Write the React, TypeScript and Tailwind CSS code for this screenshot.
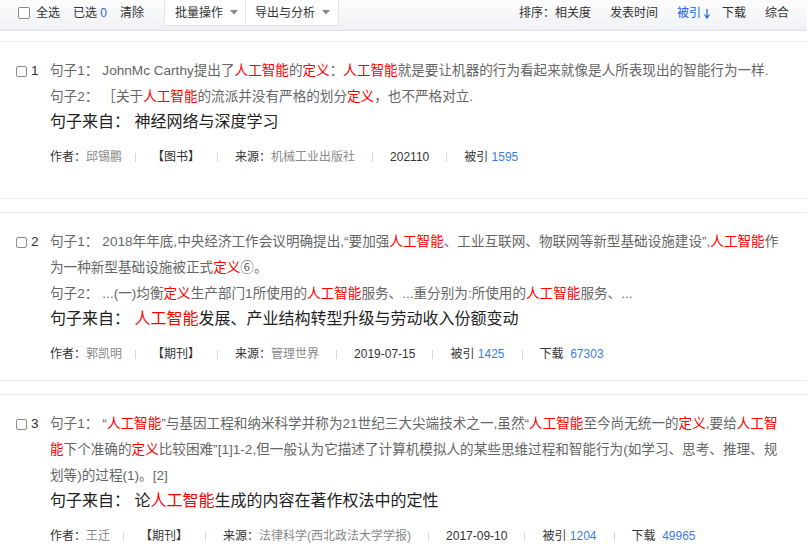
import React from "react";

const R = ({ children }: { children: React.ReactNode }) => (
  <span className="text-[#f00]">{children}</span>
);

const L = ({ children }: { children: React.ReactNode }) => (
  <span className="mr-[4px]">{children}</span>
);

function Box() {
  return <span className="inline-block w-[11px] h-[11px] border border-[#8c8c8c] rounded-[2px] bg-white" />;
}

function Caret() {
  return (
    <svg width="8" height="5" viewBox="0 0 8 5" className="ml-[7px]">
      <path d="M0 0h8L4 4.5z" fill="#888" />
    </svg>
  );
}

function Sep({ className = "mx-[17px]" }: { className?: string }) {
  return <span className={`inline-block w-px h-[9px] bg-[#d8d8d8] ${className}`} />;
}

interface MetaProps {
  author: string;
  kind: string;
  source: string;
  date: string;
  cite: string;
  download?: string;
}

function Meta({ author, kind, source, date, cite, download }: MetaProps) {
  return (
    <div className="flex items-center h-[20px] text-[12px] text-[#333] mt-[13px]">
      <span>作者：</span>
      <span className="text-[#888]">{author}</span>
      <Sep className="ml-[13px] mr-[16px]" />
      <span>{kind}</span>
      <Sep />
      <span>来源：</span>
      <span className="text-[#888]">{source}</span>
      <Sep />
      <span>{date}</span>
      <Sep />
      <span>
        被引 <span className="text-[#3c7de6]">{cite}</span>
      </span>
      {download && (
        <>
          <Sep />
          <span>
            下载&nbsp; <span className="text-[#3c7de6]">{download}</span>
          </span>
        </>
      )}
    </div>
  );
}

interface ItemProps {
  n: number;
  sentences: React.ReactNode;
  title: React.ReactNode;
  meta: MetaProps;
  pb: string;
}

function Item({ n, sentences, title, meta, pb }: ItemProps) {
  return (
    <div className={`flex border-y border-[#ebebeb] pt-[16px] ${pb}`}>
      <div className="w-[50px] pl-[16px] flex items-center h-[26px] gap-[4px] text-[13.6px] text-[#333]">
        <Box />
        <span>{n}</span>
      </div>
      <div className="flex-1 pr-[22px]">
        <div className="text-[13.6px] leading-[26px] text-[#666]">{sentences}</div>
        <div className="text-[16px] leading-[24px] text-[#222]">
          句子来自：&nbsp;{title}
        </div>
        <Meta {...meta} />
      </div>
    </div>
  );
}

export default function App() {
  return (
    <div
      className="w-[807px] h-[559px] overflow-hidden bg-white [text-spacing-trim:space-all]"
      style={{ fontFamily: '"Liberation Sans", "Noto Sans CJK SC", sans-serif' }}
    >
      {/* toolbar */}
      <div className="h-[31px] flex items-start border-b border-[#dde1e7] bg-linear-to-b from-[#fdfdfe] to-[#eff1f4] text-[12px] text-[#333]">
        <div className="flex items-center h-[26px] pl-[18px]">
          <span className="inline-block w-[12px] h-[12px] border border-[#8c8c8c] rounded-[2px] bg-white" />
          <span className="ml-[6px]">全选</span>
          <span className="ml-[13px]">
            已选 <span className="text-[#2266cc]">0</span>
          </span>
          <span className="ml-[13px]">清除</span>
        </div>
        <div className="flex ml-[20px] h-[26px]">
          <div className="flex items-center w-[82px] pl-[10px] bg-white border-x border-b border-[#e2e4e8]">
            批量操作
            <Caret />
          </div>
          <div className="flex items-center w-[93px] pl-[9px] bg-white border-r border-b border-[#e2e4e8]">
            导出与分析
            <Caret />
          </div>
        </div>
        <div className="ml-auto flex items-center h-[26px] pr-[18px]">
          <span>排序：相关度</span>
          <span className="ml-[19px]">发表时间</span>
          <span className="ml-[19px] text-[#1b63d6] flex items-center">
            被引
            <svg width="8" height="11" viewBox="0 0 8 11" className="ml-[2px]">
              <path d="M4 1v8.5M1.5 6.5L4 10l2.5-3.5" stroke="#1b63d6" strokeWidth="1.2" fill="none" />
            </svg>
          </span>
          <span className="ml-[11px]">下载</span>
          <span className="ml-[19px]">综合</span>
        </div>
      </div>

      <div className="mt-[10px] flex flex-col gap-[13px]">
        <Item
          n={1}
          pb="pb-[31px]"
          sentences={
            <>
              <p>
                <L>句子1：</L>JohnMc Carthy提出了<R>人工智能</R>的<R>定义</R>：<R>人工智能</R>
                就是要让机器的行为看起来就像是人所表现出的智能行为一样.
              </p>
              <p>
                <L>句子2：</L>［关于<R>人工智能</R>的流派并没有严格的划分<R>定义</R>，也不严格对立.
              </p>
            </>
          }
          title={<>神经网络与深度学习</>}
          meta={{ author: "邱锡鹏", kind: "【图书】", source: "机械工业出版社", date: "202110", cite: "1595" }}
        />
        <Item
          n={2}
          pb="pb-[16px]"
          sentences={
            <>
              <p>
                <L>句子1：</L>2018年年底,中央经济工作会议明确提出,“要加强<R>人工智能</R>
                、工业互联网、物联网等新型基础设施建设”,<R>人工智能</R>作为一种新型基础设施被正式
                <R>定义</R>⑥。
              </p>
              <p>
                <L>句子2：</L>...(一)均衡<R>定义</R>生产部门1所使用的<R>人工智能</R>服务、...重分别为:所使用的
                <R>人工智能</R>服务、...
              </p>
            </>
          }
          title={
            <>
              <R>人工智能</R>发展、产业结构转型升级与劳动收入份额变动
            </>
          }
          meta={{
            author: "郭凯明",
            kind: "【期刊】",
            source: "管理世界",
            date: "2019-07-15",
            cite: "1425",
            download: "67303",
          }}
        />
        <Item
          n={3}
          pb="pb-[16px]"
          sentences={
            <p>
              <L>句子1：</L>“<R>人工智能</R>”与基因工程和纳米科学并称为21世纪三大尖端技术之一,虽然“
              <R>人工智能</R>至今尚无统一的<R>定义</R>,要给<R>人工智能</R>下个准确的<R>定义</R>
              比较困难”[1]1-2,但一般认为它描述了计算机模拟人的某些思维过程和智能行为(如学习、思考、推理、规划等)的过程(1)。[2]
            </p>
          }
          title={
            <>
              论<R>人工智能</R>生成的内容在著作权法中的定性
            </>
          }
          meta={{
            author: "王迁",
            kind: "【期刊】",
            source: "法律科学(西北政法大学学报)",
            date: "2017-09-10",
            cite: "1204",
            download: "49965",
          }}
        />
      </div>
    </div>
  );
}
